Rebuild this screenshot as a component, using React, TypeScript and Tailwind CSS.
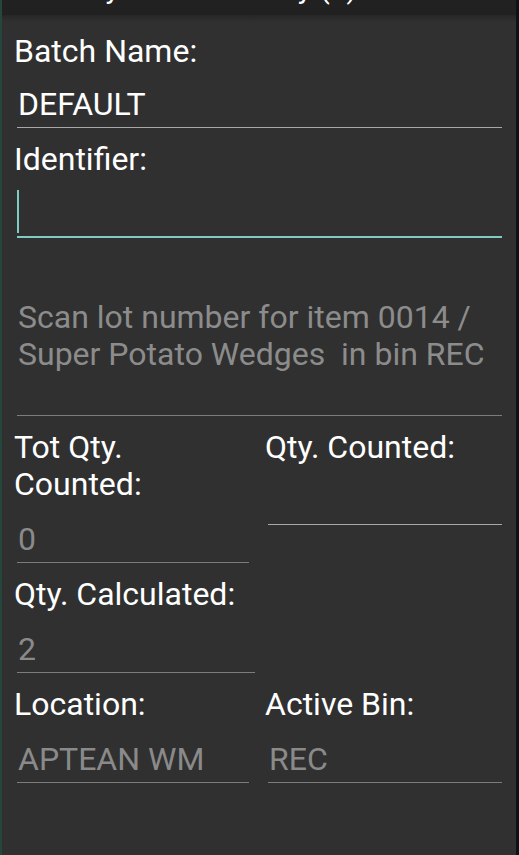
const labelCls = "text-[32px] leading-[37px] text-white";
const valueCls = "text-[32px] leading-[37px] pl-[1px]";

type FieldProps = {
  value?: string;
  muted?: boolean;
  line?: string;
  className?: string;
};

const Field = ({ value = "", muted = true, line = "border-[#7c7c7c]", className = "" }: FieldProps) => (
  <div className={`ml-[3px] border-b pb-[4px] ${line} ${className}`}>
    <div className={`${valueCls} ${muted ? "text-[#8a8a8a]" : "text-white"} h-[37px]`}>{value}</div>
  </div>
);

export default function App() {
  return (
    <div className="w-[519px] h-[855px] flex flex-col overflow-hidden bg-[#303030] border-l-2 border-l-[#24463d] border-r-[3px] border-r-[#0e1216] font-['Roboto',sans-serif]">
      {/* toolbar, scrolled mostly out of view */}
      <div className="h-[15px] bg-[#212121] overflow-hidden shrink-0">
        <div className="mt-[-30px] pl-[68px] text-[30px] leading-[36px] text-white whitespace-nowrap">
          Physical Inventory (1)
        </div>
      </div>
      <div className="h-[7px] shrink-0 bg-gradient-to-b from-[#262626] to-[#303030]" />

      <div className="flex flex-col pl-[12px] pr-[14px]">
        <div className={`${labelCls} mt-[11px]`}>Batch Name:</div>
        <Field value="DEFAULT" muted={false} line="border-[#a8a8a8]" className="mt-[16px]" />

        <div className={`${labelCls} mt-[13px]`}>Identifier:</div>
        <div className="ml-[3px] mt-[12px] pb-[3px] border-b-2 border-[#80cbc4]">
          <div className="w-[2px] h-[43px] bg-[#80cbc4]" />
        </div>

        <div className="ml-[3px] mt-[61px] pb-[42px] border-b border-[#7c7c7c]">
          <div className="text-[32px] leading-[37px] pl-[1px] text-[#8c8c8c]">
            Scan lot number for item 0014 /<br />
            Super Potato Wedges&nbsp; in bin REC
          </div>
        </div>

        <div className="grid grid-cols-2 gap-x-[14px] mt-[13px]">
          <div className="flex flex-col">
            <div className={labelCls}>
              Tot Qty.
              <br />
              Counted:
            </div>
            <Field value="0" className="mt-[18px] mr-[2px]" />
          </div>
          <div className="flex flex-col">
            <div className={labelCls}>Qty. Counted:</div>
            <div className="ml-[3px] h-[59px] border-b border-[#a8a8a8]" />
          </div>
        </div>

        <div className={`${labelCls} mt-[13px]`}>Qty. Calculated:</div>
        <Field value="2" className="mt-[18px] w-[238px]" />

        <div className="grid grid-cols-2 gap-x-[14px] mt-[13px]">
          <div className="flex flex-col">
            <div className={labelCls}>Location:</div>
            <Field value="APTEAN WM" className="mt-[18px] mr-[2px]" />
          </div>
          <div className="flex flex-col">
            <div className={labelCls}>Active Bin:</div>
            <Field value="REC" className="mt-[18px]" />
          </div>
        </div>
      </div>
    </div>
  );
}
